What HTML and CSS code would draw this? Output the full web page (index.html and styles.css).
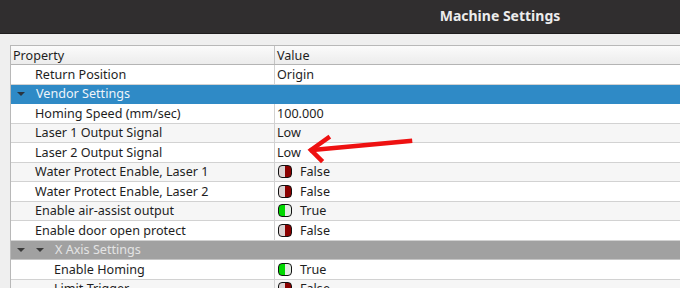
FILE: index.html
```html
<!DOCTYPE html>
<html lang="en">
<head>
    <meta charset="UTF-8">
    <title>Machine Settings</title>
    <link rel="stylesheet" href="styles.css">
</head>
<body>
    <div class="titlebar">Machine Settings</div>
    <div class="content">
        <div class="grid">
            <div class="row header">
                <div class="cell prop">Property</div>
                <div class="cell value">Value</div>
            </div>
            <div class="row">
                <div class="cell prop lvl1">Return Position</div>
                <div class="cell value">Origin</div>
            </div>
            <div class="row group blue">
                <div class="cell prop"><span class="caret"></span>Vendor Settings</div>
            </div>
            <div class="row">
                <div class="cell prop lvl1">Homing Speed (mm/sec)</div>
                <div class="cell value">100.000</div>
            </div>
            <div class="row alt">
                <div class="cell prop lvl1">Laser 1 Output Signal</div>
                <div class="cell value">Low</div>
            </div>
            <div class="row">
                <div class="cell prop lvl1">Laser 2 Output Signal</div>
                <div class="cell value">Low</div>
            </div>
            <div class="row alt">
                <div class="cell prop lvl1">Water Protect Enable, Laser 1</div>
                <div class="cell value"><span class="toggle off"></span>False</div>
            </div>
            <div class="row">
                <div class="cell prop lvl1">Water Protect Enable, Laser 2</div>
                <div class="cell value"><span class="toggle off"></span>False</div>
            </div>
            <div class="row alt">
                <div class="cell prop lvl1">Enable air-assist output</div>
                <div class="cell value"><span class="toggle on"></span>True</div>
            </div>
            <div class="row">
                <div class="cell prop lvl1">Enable door open protect</div>
                <div class="cell value"><span class="toggle off"></span>False</div>
            </div>
            <div class="row group gray">
                <div class="cell prop"><span class="caret"></span><span class="caret"></span>X Axis Settings</div>
            </div>
            <div class="row">
                <div class="cell prop lvl2">Enable Homing</div>
                <div class="cell value"><span class="toggle on"></span>True</div>
            </div>
            <div class="row alt">
                <div class="cell prop lvl2">Limit Trigger</div>
                <div class="cell value"><span class="toggle off"></span>False</div>
            </div>
        </div>
    </div>

    <!-- red annotation arrow drawn over the grid -->
    <svg class="arrow" width="120" height="40" viewBox="0 0 120 40">
        <path d="M110 11 L12 20" />
        <path d="M28 8 L11 20 L21 30" />
    </svg>
</body>
</html>
```

FILE: styles.css
```css
body, html {
    margin: 0;
    padding: 0;
    width: 680px;
    height: 288px;
    overflow: hidden;
    background-color: #efefef;
    font-family: 'Noto Sans', 'Open Sans', sans-serif;
    font-size: 12.6px;
    color: #1e1e1e;
}
.titlebar {
    height: 33px;
    line-height: 32px;
    padding-left: 320px;
    text-align: center;
    background-color: #302e2f;
    border-bottom: 1px solid #1f1d1e;
    color: #ececec;
    font-weight: bold;
    font-size: 14px;
}
.content {
    padding: 11px 0 0 10px;
}
.grid {
    width: 720px;
    border-left: 1px solid #b8b8b8;
    border-top: 1px solid #b8b8b8;
    background-color: #ffffff;
}
.row {
    display: flex;
    height: 19.5px;
    box-sizing: border-box;
    border-bottom: 1px solid #d2d2d2;
    background-color: #ffffff;
}
.row.alt {
    background-color: #f6f6f6;
}
.row.header {
    height: 19px;
    border-bottom: 1px solid #b4b4b4;
    background: linear-gradient(#fbfbfb, #ececec);
}
.cell {
    display: flex;
    align-items: center;
    white-space: nowrap;
}
.prop {
    width: 264px;
    padding-left: 2px;
    border-right: 1px solid #d2d2d2;
    box-sizing: border-box;
}
.header .prop {
    border-right-color: #c4c4c4;
}
.value {
    padding-left: 2px;
}
.lvl1 {
    padding-left: 24px;
}
.lvl2 {
    padding-left: 43px;
}
.row.group .prop {
    border-right: none;
    padding-left: 6px;
}
.row.blue {
    background-color: #2f8ac6;
    color: #eef4fa;
    border-bottom-color: #2f8ac6;
}
.row.gray {
    background-color: #a1a1a1;
    color: #e4e4e4;
    border-bottom-color: #c6c6c6;
}
.caret {
    width: 0;
    height: 0;
    border-left: 4px solid transparent;
    border-right: 4px solid transparent;
    border-top: 4px solid #2a3540;
    margin-right: 11px;
}
.gray .caret {
    border-top-color: #3a3a3a;
}
.toggle {
    width: 12px;
    height: 11px;
    border: 1.5px solid #111111;
    border-radius: 4px;
    margin: 0 8px 0 1px;
}
.toggle.off {
    background: linear-gradient(to right, #ddd4d4 50%, #8a0000 50%);
}
.toggle.on {
    background: linear-gradient(to right, #00d800 50%, #e3ebe3 50%);
}
.arrow {
    position: absolute;
    left: 300px;
    top: 130px;
}
.arrow path {
    fill: none;
    stroke: #ee1111;
    stroke-width: 4.5;
    stroke-linecap: square;
    stroke-linejoin: miter;
}
```
